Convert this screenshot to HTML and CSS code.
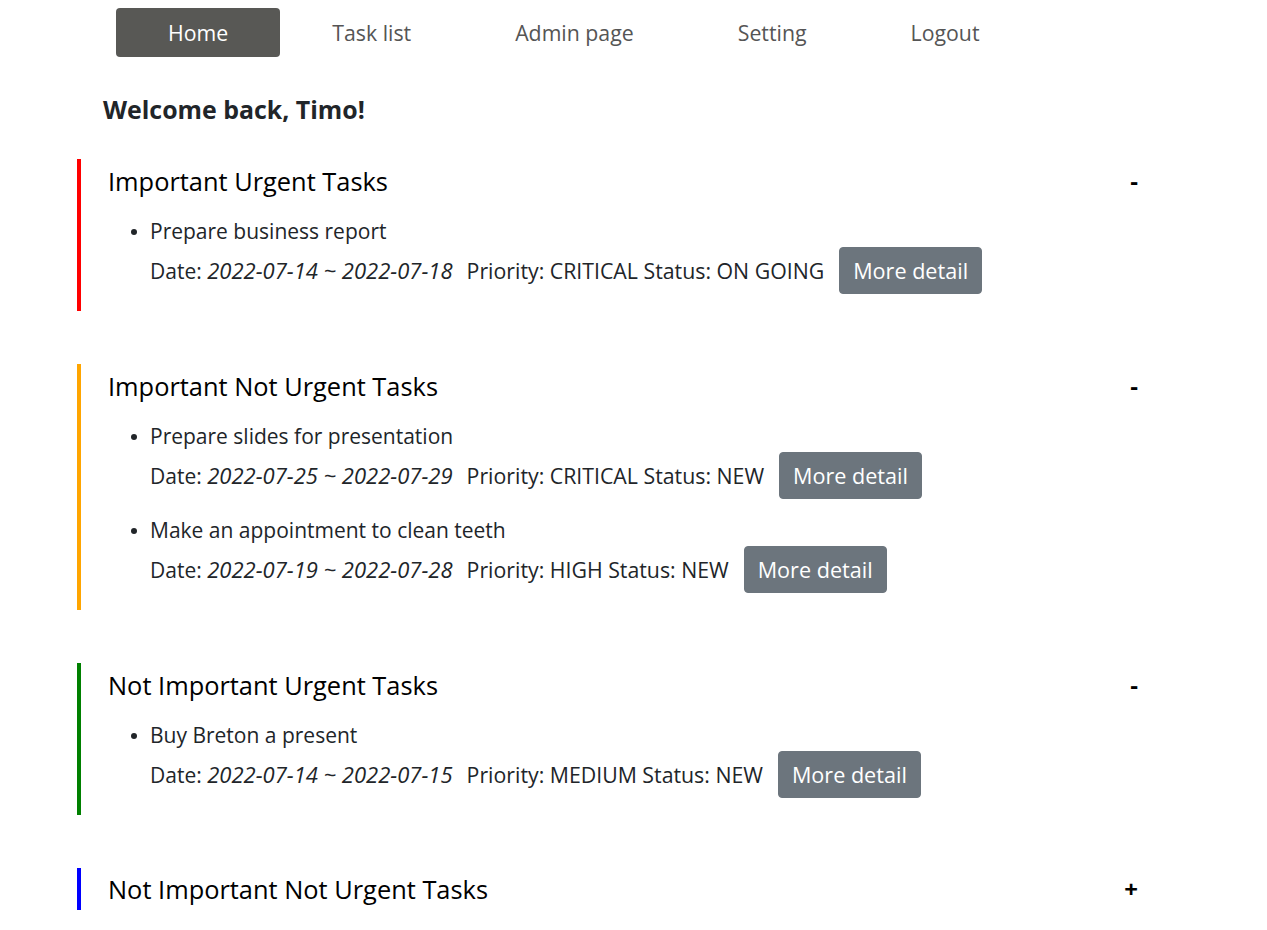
FILE: index.html
```html
<!DOCTYPE html>
<html lang="en">
<head>
<meta charset="utf-8">
<title>Home</title>
<link rel="stylesheet" href="styles.css">
</head>
<body>
<nav class="nav">
  <a class="nav-item active" href="#">Home</a>
  <a class="nav-item" href="#">Task list</a>
  <a class="nav-item" href="#">Admin page</a>
  <a class="nav-item" href="#">Setting</a>
  <a class="nav-item" href="#">Logout</a>
</nav>
<main class="main">
  <h4 class="welcome">Welcome back, Timo!</h4>

  <section class="group red">
    <div class="group-head"><h3>Important Urgent Tasks</h3><span class="toggle">-</span></div>
    <ul class="tasks">
      <li>
        <div class="task-name">Prepare business report</div>
        <div class="task-meta"><span>Date: <em>2022-07-14 ~ 2022-07-18</em></span><span class="info">Priority: CRITICAL Status: ON GOING</span><button class="btn">More detail</button></div>
      </li>
    </ul>
  </section>

  <section class="group orange">
    <div class="group-head"><h3>Important Not Urgent Tasks</h3><span class="toggle">-</span></div>
    <ul class="tasks">
      <li>
        <div class="task-name">Prepare slides for presentation</div>
        <div class="task-meta"><span>Date: <em>2022-07-25 ~ 2022-07-29</em></span><span class="info">Priority: CRITICAL Status: NEW</span><button class="btn">More detail</button></div>
      </li>
      <li>
        <div class="task-name">Make an appointment to clean teeth</div>
        <div class="task-meta"><span>Date: <em>2022-07-19 ~ 2022-07-28</em></span><span class="info">Priority: HIGH Status: NEW</span><button class="btn">More detail</button></div>
      </li>
    </ul>
  </section>

  <section class="group green">
    <div class="group-head"><h3>Not Important Urgent Tasks</h3><span class="toggle">-</span></div>
    <ul class="tasks">
      <li>
        <div class="task-name">Buy Breton a present</div>
        <div class="task-meta"><span>Date: <em>2022-07-14 ~ 2022-07-15</em></span><span class="info">Priority: MEDIUM Status: NEW</span><button class="btn">More detail</button></div>
      </li>
    </ul>
  </section>

  <section class="group blue collapsed">
    <div class="group-head"><h3>Not Important Not Urgent Tasks</h3><span class="toggle plus">+</span></div>
  </section>
</main>
</body>
</html>
```

FILE: styles.css
```css
* { box-sizing: border-box; }
html, body { margin: 0; padding: 0; background: #fff; }
body {
  font-family: "Open Sans", "Noto Sans", "DejaVu Sans", sans-serif;
  color: #212529;
  font-size: 21px;
}
.nav {
  display: flex;
  padding: 8px 0 0 116px;
}
.nav-item {
  display: block;
  padding: 10px 52px;
  line-height: 29px;
  font-size: 21.3px;
  color: #555;
  text-decoration: none;
  border-radius: 4px;
}
.nav-item.active {
  background: #585855;
  color: #fff;
}
.main {
  padding: 0 0 0 77px;
}
.welcome {
  margin: 38px 0 0 26px;
  font-size: 24.9px;
  line-height: 29px;
  font-weight: 700;
}
.group {
  margin: 53px 0 0 0;
  width: 1064px;
  border-left: 4px solid;
  padding: 0 3px 1px 27px;
}
.group.red { border-color: #f00; margin-top: 35px; }
.group.orange { border-color: #ffa500; }
.group.green { border-color: #008000; }
.group.blue { border-color: #00f; padding-bottom: 0; }
.group-head {
  display: flex;
  justify-content: space-between;
  align-items: center;
  height: 44px;
}
.group.collapsed .group-head { height: 42px; }
.group-head h3 {
  margin: 0;
  font-size: 25.4px;
  font-weight: 400;
  color: #000;
}
.toggle {
  font-size: 24px;
  font-weight: 700;
  color: #000;
  line-height: 30px;
}
.tasks {
  margin: 13px 0 0 0;
  padding: 0 0 0 42px;
  list-style: none;
}
.tasks li {
  position: relative;
  padding: 0 0 16px 0;
}
.tasks li::before {
  content: "";
  position: absolute;
  left: -19px;
  top: 12.5px;
  width: 6px;
  height: 6px;
  border-radius: 50%;
  background: #212529;
}
.task-name {
  line-height: 31px;
}
.task-meta {
  display: flex;
  align-items: center;
  line-height: 30px;
}
.task-meta em { font-style: italic; font-size: 22px; }
.info { margin-left: 14px; font-size: 21.3px; }
.btn {
  margin-left: 15px;
  font-family: inherit;
  font-size: 21.6px;
  line-height: 29px;
  padding: 8px 13px;
  border: 1px solid #6c757d;
  background: #6c757d;
  color: #fff;
  border-radius: 4px;
}
```
